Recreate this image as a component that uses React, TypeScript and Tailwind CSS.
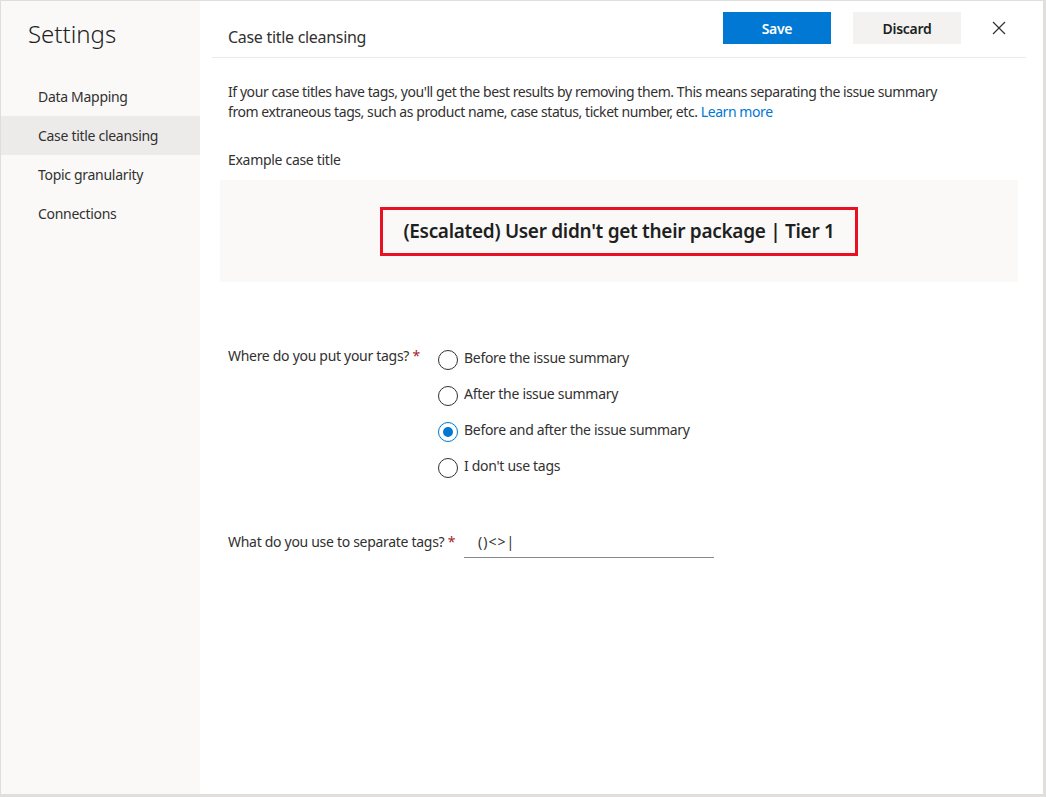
import React, { useState } from "react";

const navItems = ["Data Mapping", "Case title cleansing", "Topic granularity", "Connections"];

const tagOptions = [
  "Before the issue summary",
  "After the issue summary",
  "Before and after the issue summary",
  "I don't use tags",
];

const Radio = ({ checked }: { checked: boolean }) => (
  <span
    className={`w-5 h-5 rounded-full border flex items-center justify-center shrink-0 ${
      checked ? "border-[#0078d4]" : "border-[#323130]"
    }`}
  >
    {checked && <span className="w-[10px] h-[10px] rounded-full bg-[#0078d4]" />}
  </span>
);

const App = () => {
  const [active] = useState("Case title cleansing");
  const [placement, setPlacement] = useState(2);

  return (
    <div
      className="w-[1046px] h-[797px] bg-[#e1dfdd] text-[#323130] tracking-[-0.3px]"
      style={{ fontFamily: '"Segoe UI", "Noto Sans", Arial, sans-serif' }}
    >
      <div className="flex h-[795px] w-[1044px] border border-[#dedede] bg-white">
        {/* sidebar */}
        <aside className="w-[199px] bg-[#faf9f8] shrink-0">
          <h1 className="text-[24px] font-light pl-[27px] pt-[17px] leading-8 text-[#201f1e] tracking-normal">
            Settings
          </h1>
          <nav className="mt-[27px]">
            {navItems.map((item) => (
              <div
                key={item}
                className={`h-[39px] flex items-center pl-[37px] text-[14px] ${
                  item === active ? "bg-[#edebe9]" : ""
                }`}
              >
                {item}
              </div>
            ))}
          </nav>
        </aside>

        {/* main */}
        <main className="flex-1 pl-[12px] pr-[17px]">
          <header className="h-[57px] border-b border-[#edebe9] flex items-start">
            <h2 className="text-[16px] pl-[16px] pt-[26px] leading-5 text-[#323130]">Case title cleansing</h2>
            <div className="ml-auto flex items-center pt-[11px]">
              <button className="w-[108px] h-[32px] bg-[#0078d4] text-white text-[14px] font-semibold">Save</button>
              <button className="w-[108px] h-[32px] bg-[#f3f2f1] text-[#201f1e] text-[14px] font-semibold ml-[22px]">
                Discard
              </button>
              <button className="w-[32px] h-[32px] ml-[22px] mr-[11px] flex items-center justify-center">
                <svg width="14" height="14" viewBox="0 0 14 14" fill="none" stroke="#323130" strokeWidth="1.2">
                  <path d="M1 1 L13 13 M13 1 L1 13" />
                </svg>
              </button>
            </div>
          </header>

          <p className="pl-[16px] pt-[24px] text-[14px] leading-5 w-[780px] whitespace-nowrap tracking-[-0.43px]">
            If your case titles have tags, you'll get the best results by removing them. This means separating the
            issue summary
            <br />
            from extraneous tags, such as product name, case status, ticket number, etc.{" "}
            <a className="text-[#0078d4]">Learn more</a>
          </p>

          <div className="pl-[16px] mt-[28px] text-[14px] leading-5">Example case title</div>

          <div className="mt-[10px] mx-[8px] h-[102px] bg-[#faf9f8] flex items-center justify-center">
            <div className="border-[3px] border-[#e81123] w-[478px] h-[49px] flex items-center justify-center text-[19px] font-semibold text-[#201f1e]">
              (Escalated) User didn't get their package | Tier 1
            </div>
          </div>

          <div className="flex pl-[16px] mt-[64px] text-[14px]">
            <div className="w-[210px] leading-5">
              Where do you put your tags? <span className="text-[#a4262c]">*</span>
            </div>
            <div className="flex flex-col gap-[16px] pt-[4px]">
              {tagOptions.map((opt, i) => (
                <label
                  key={opt}
                  className="flex items-center gap-[6px] h-5 cursor-pointer"
                  onClick={() => setPlacement(i)}
                >
                  <Radio checked={placement === i} />
                  <span className="leading-5 -mt-[4px]">{opt}</span>
                </label>
              ))}
            </div>
          </div>

          <div className="flex items-end pl-[16px] mt-[48px] text-[14px]">
            <div className="w-[236px] leading-5 pb-[6px] whitespace-nowrap">
              What do you use to separate tags? <span className="text-[#a4262c]">*</span>
            </div>
            <div className="w-[250px] h-[32px] border-b border-[#8a8886] flex items-center pl-[14px] leading-5 tracking-[1px]">
              ()&lt;&gt;|
            </div>
          </div>
        </main>
      </div>
    </div>
  );
};

export default App;
